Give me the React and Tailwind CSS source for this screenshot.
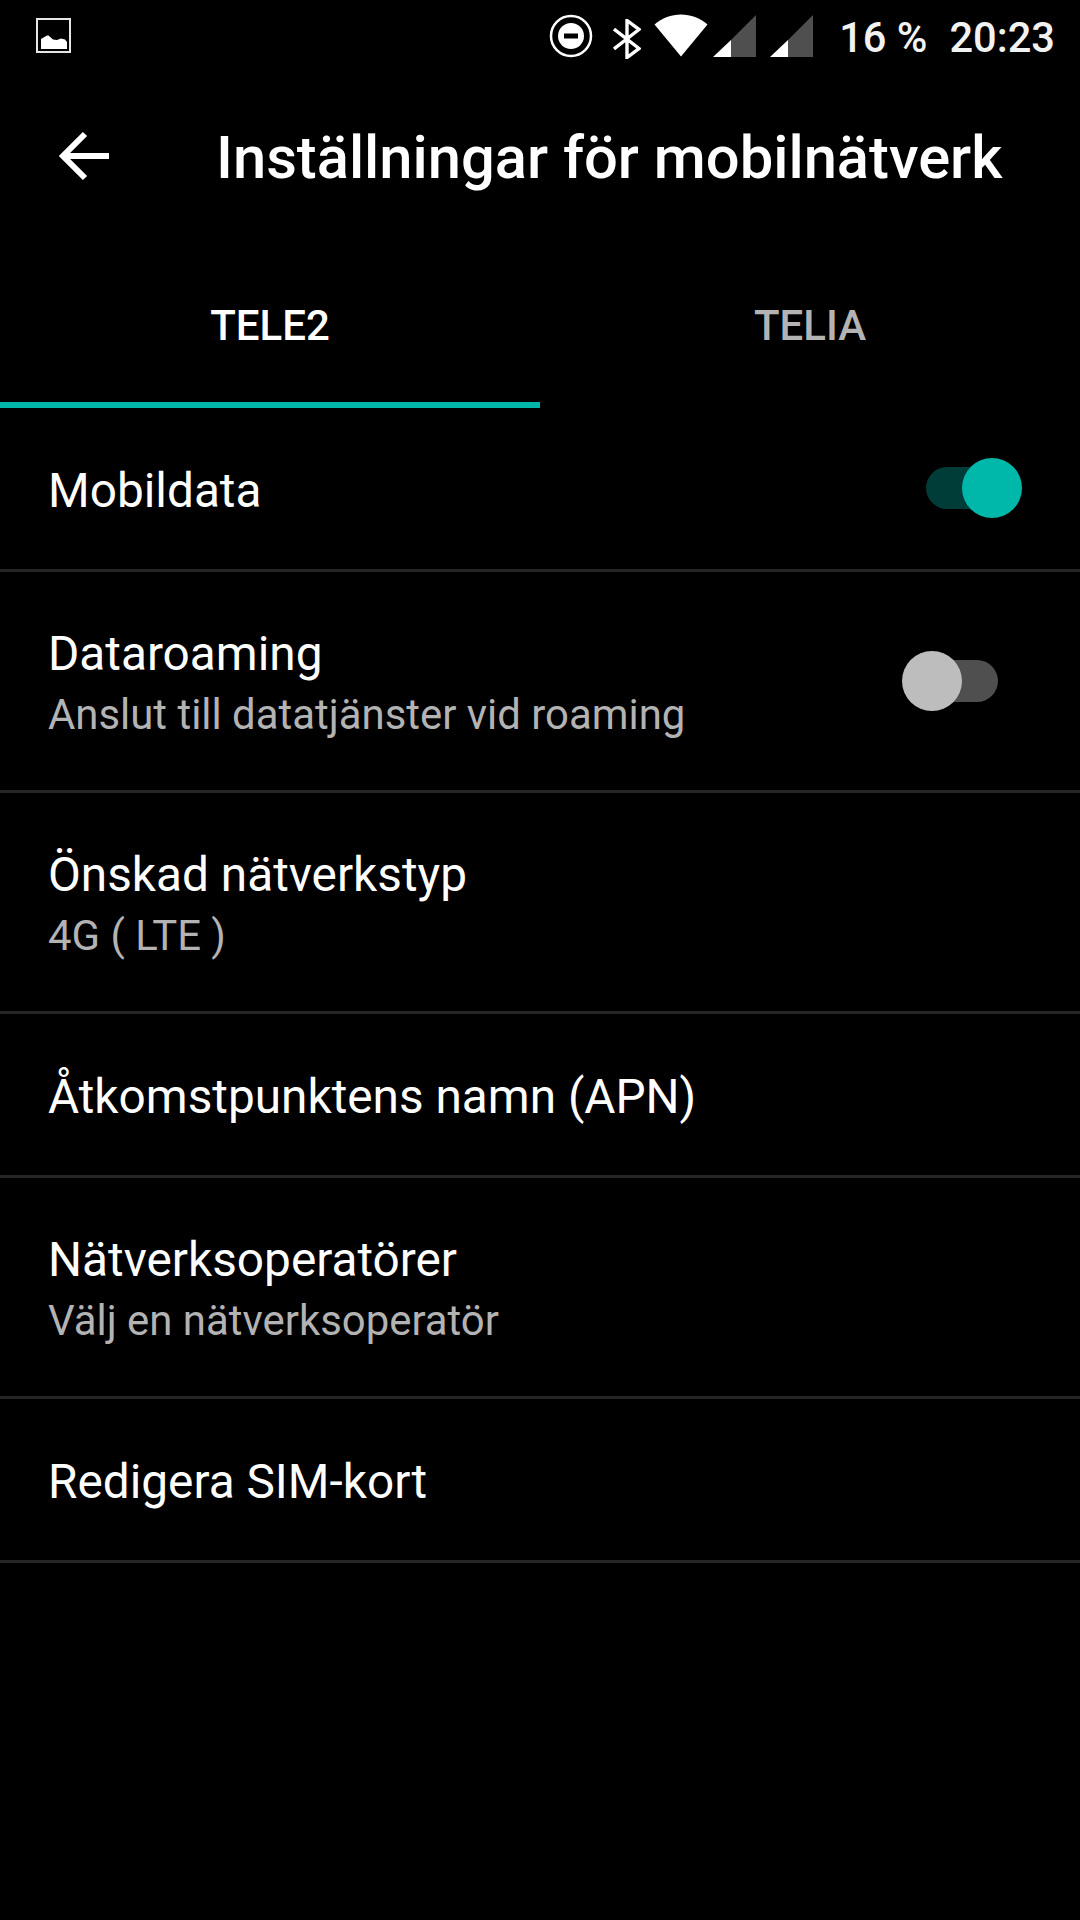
const font = { fontFamily: 'Roboto, sans-serif' }

const PictureIcon = () => (
  <svg width="36" height="36" viewBox="0 0 36 36" fill="none">
    <rect x="1" y="1" width="33" height="33" stroke="#e6e6e6" strokeWidth="2" />
    <path d="M5 31V21L11 17.5L12.5 17.5L17 21.5L21 22L25 20.5L29 21.5L31 24V31Z" fill="#fff" />
  </svg>
)

const DndIcon = () => (
  <svg width="44" height="44" viewBox="0 0 44 44">
    <circle cx="22" cy="22" r="20" fill="none" stroke="#fff" strokeWidth="2.5" />
    <circle cx="22" cy="22" r="13" fill="#fff" />
    <rect x="15" y="19.5" width="14" height="5" fill="#000" />
  </svg>
)

const BluetoothIcon = () => (
  <svg width="28" height="40" viewBox="0 0 28 40" fill="none">
    <path d="M1 10L26 29.5L14 38.5V1.5L26 10.5L1 30" stroke="#fff" strokeWidth="3.4" />
  </svg>
)

const WifiIcon = () => (
  <svg width="54" height="43" viewBox="0 0 54 43">
    <path d="M0.5 10.5C15 -3 39 -3 53.5 10.5L27 42.5Z" fill="#fff" />
  </svg>
)

const SignalIcon = () => (
  <svg width="43" height="42" viewBox="0 0 43 42">
    <path d="M43 0V42H18V25Z" fill="#4f4f4f" />
    <path d="M18 25V42H0Z" fill="#fff" />
  </svg>
)

const Toggle = ({ on }) => (
  <div className="relative w-[84px] h-[42px]">
    <div className={`w-full h-full rounded-full ${on ? 'bg-[#003d38]' : 'bg-[#4f4f4f]'}`} />
    <div
      className={`absolute top-[-9px] w-[60px] h-[60px] rounded-full ${
        on ? 'right-[-12px] bg-[#00b8a9]' : 'left-[-12px] bg-[#bdbdbd]'
      }`}
    />
  </div>
)

const Row = ({ title, subtitle, height, toggle }) => (
  <div className={`flex items-center justify-between pl-[48px] border-b-[3px] border-[#262626] ${height}`}>
    <div className={subtitle ? 'pt-[7px]' : 'pt-[5px]'}>
      <div className="text-[47.75px] leading-[60px] text-white">{title}</div>
      {subtitle && <div className="text-[41.9px] leading-[61px] text-[#b3b3b3]">{subtitle}</div>}
    </div>
    {toggle}
  </div>
)

export default function App() {
  return (
    <div className="w-[1080px] h-[1920px] bg-black overflow-hidden" style={font}>
      <div className="flex items-center h-[72px] pl-[36px] pr-[25px]">
        <PictureIcon />
        <div className="ml-auto flex items-center gap-[13px]">
          <div className="mr-[7px]"><DndIcon /></div>
          <div className="mt-[5px]"><BluetoothIcon /></div>
          <div className="mt-[-2px]"><WifiIcon /></div>
        </div>
        <div className="ml-[5px] flex items-center gap-[14px]">
          <SignalIcon />
          <SignalIcon />
        </div>
        <div className="ml-[26px] pt-[4px] text-[41.6px] font-medium text-[#f2f2f2] whitespace-pre">16 %</div>
        <div className="ml-[22px] pt-[4px] text-[41.6px] font-medium text-[#f2f2f2]">20:23</div>
      </div>

      <div className="flex items-center h-[168px]">
        <svg className="ml-[58px]" width="54" height="50" viewBox="0 0 54 50" fill="none">
          <path d="M51 25H7M27 3L5 25L27 47" stroke="#fff" strokeWidth="6" />
        </svg>
        <div className="ml-[104px] pt-[5px] text-[59.7px] font-medium text-white whitespace-nowrap">
          Inställningar för mobilnätverk
        </div>
      </div>

      <div className="flex h-[168px]">
        <div className="w-[540px] pt-[8px] border-b-[6px] border-[#00b8a9] flex items-center justify-center text-[42px] font-medium text-white">
          TELE2
        </div>
        <div className="w-[540px] pt-[8px] pb-[6px] flex items-center justify-center text-[42px] font-medium text-[#b3b3b3]">
          TELIA
        </div>
      </div>

      <Row title="Mobildata" height="h-[164px]" toggle={<div className="mr-[70px] mt-[-2px]"><Toggle on /></div>} />
      <Row
        title="Dataroaming"
        subtitle="Anslut till datatjänster vid roaming"
        height="h-[221px]"
        toggle={<div className="mr-[82px]"><Toggle /></div>}
      />
      <Row title="Önskad nätverkstyp" subtitle="4G ( LTE )" height="h-[221px]" />
      <Row title="Åtkomstpunktens namn (APN)" height="h-[164px]" />
      <Row title="Nätverksoperatörer" subtitle="Välj en nätverksoperatör" height="h-[221px]" />
      <Row title="Redigera SIM-kort" height="h-[164px]" />
    </div>
  )
}
